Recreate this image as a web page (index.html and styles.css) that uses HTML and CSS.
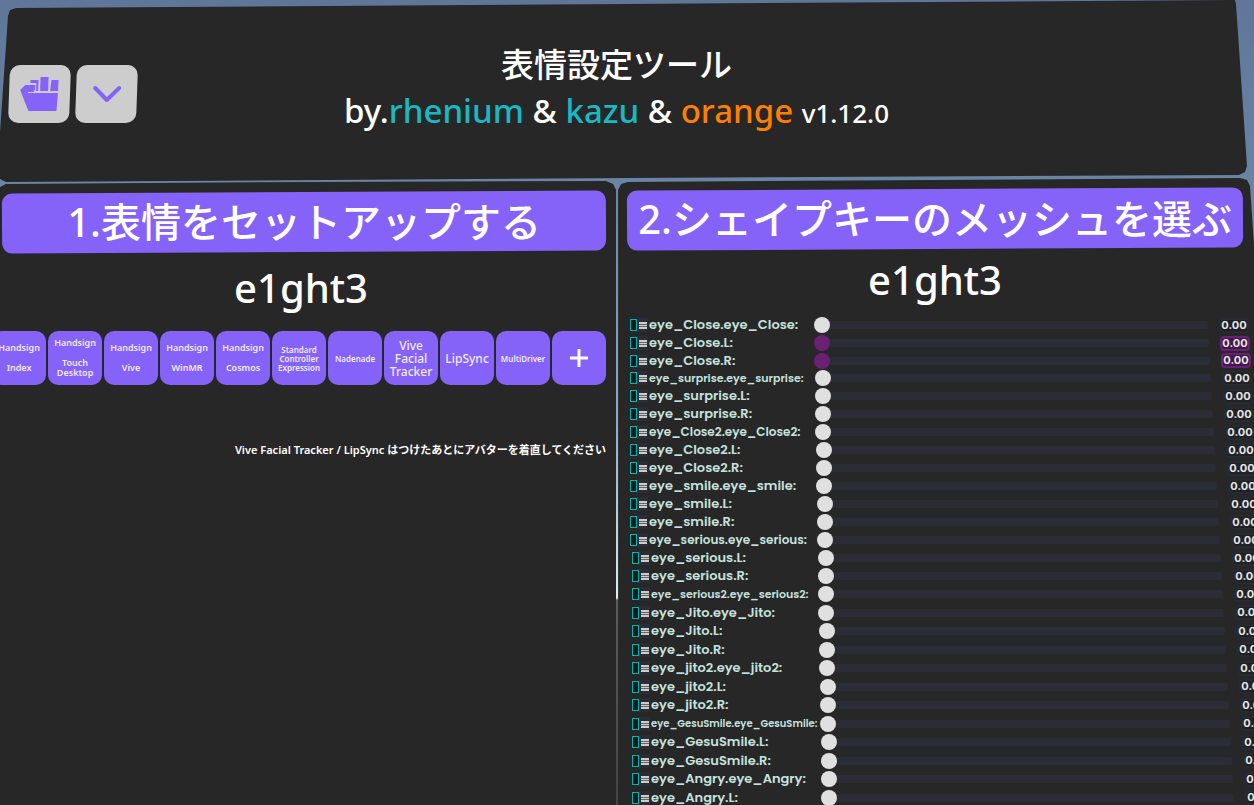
FILE: index.html
```
<!DOCTYPE html>
<html lang="ja">
  <head>
    <meta charset="UTF-8" />
    <meta name="viewport" content="width=device-width, initial-scale=1.0" />
    <title>表情設定ツール</title>
    <link rel="stylesheet" href="styles.css">
  </head>
  <body>
    <header class="top">
      <div class="top-buttons">
        <button class="icon-btn" aria-label="Grab">
          <svg width="40" height="36" viewBox="0 0 40 36" fill="#8562f8">
            <path d="M0 14 5 9H15V14H14V16H8V17H38L37 35H9Z" />
            <path d="M10 4H18V15H16V7H10Z" />
            <path d="M20 1H28V15H20Z" />
            <path d="M31 4H38V15H30Z" />
          </svg>
        </button>
        <button class="icon-btn" aria-label="Open menu">
          <svg width="30" height="20" viewBox="0 0 30 20" fill="none" stroke="#8562f8" stroke-width="4" stroke-linecap="round" stroke-linejoin="round">
            <path d="M3 4 15 16 27 4" />
          </svg>
        </button>
      </div>
      <div class="top-title">
        <h1>表情設定ツール</h1>
        <p>by.<span class="cyan">rhenium</span> &amp; <span class="cyan">kazu</span> &amp; <span class="orange">orange</span> <small>v1.12.0</small></p>
      </div>
    </header>

    <main>
      <section class="panel setup">
        <h2>1.表情をセットアップする</h2>
        <p class="avatar">e1ght3</p>
        <div class="presets">
          <button>Handsign<br><br>Index</button>
          <button>Handsign<br><br>Touch<br>Desktop</button>
          <button>Handsign<br><br>Vive</button>
          <button>Handsign<br><br>WinMR</button>
          <button>Handsign<br><br>Cosmos</button>
          <button class="small">Standard<br>Controller<br>Expression</button>
          <button class="small">Nadenade</button>
          <button class="large">Vive<br>Facial<br>Tracker</button>
          <button class="large">LipSync</button>
          <button class="small">MultiDriver</button>
          <button aria-label="Add">
            <svg width="20" height="20" viewBox="0 0 20 20" stroke="#fff" stroke-width="3">
              <path d="M10 1V19M1 10H19" />
            </svg>
          </button>
        </div>
        <p class="note">Vive Facial Tracker / LipSync はつけたあとにアバターを着直してください</p>
      </section>

      <section class="panel meshes">
        <h2>2.シェイプキーのメッシュを選ぶ</h2>
        <p class="avatar">e1ght3</p>
        <div id="shapeList" class="shape-list"></div>
      </section>
    </main>

    <script>
      const groups = [
        "Close",
        "surprise",
        "Close2",
        "smile",
        "serious",
        "Jito",
        "jito2",
        "GesuSmile",
        "Angry",
      ];
      const selected = ["eye_Close.L", "eye_Close.R"];

      // long names get a smaller font so they stay left of the slider
      const sizes = {
        "eye_surprise.eye_surprise": "long",
        "eye_Close2.eye_Close2": "medium",
        "eye_serious.eye_serious": "medium",
        "eye_serious2.eye_serious2": "long",
        "eye_GesuSmile.eye_GesuSmile": "longest",
      };

      const names = [];
      groups.forEach((g) => {
        names.push(`eye_${g}.eye_${g}`, `eye_${g}.L`, `eye_${g}.R`);
        if (g === "serious") names.push("eye_serious2.eye_serious2");
      });

      document.getElementById("shapeList").innerHTML = names
        .slice(0, 27)
        .map(
          (name, i) => `
          <div class="shape-row ${selected.includes(name) ? "selected" : ""}" style="--row: ${i}">
            <div class="shape-head">
              <input type="checkbox" aria-label="${name}" />
              <button class="handle" aria-label="Menu"></button>
              <label for="shape${i}" class="${sizes[name] || ""}">${name}:</label>
            </div>
            <input type="range" id="shape${i}" min="0" max="1" step="0.01" value="0" />
            <output for="shape${i}">0.00</output>
          </div>`
        )
        .join("");
    </script>
  </body>
</html>
```
FILE: styles.css
```
* {
  box-sizing: border-box;
}
html {
  height: 100%;
  overflow: hidden;
}
body {
  min-height: 100vh;
  margin: 0;
  display: flex;
  flex-direction: column;
  overflow: hidden;
  color: white;
  font-family: "Noto Sans", "Noto Sans CJK JP", sans-serif;
  font-weight: 500;
  background: linear-gradient(#5f7699 0, #6a84a5 180px, #8fa8cf 420px, #d8f0f0 598px, #5c5c5c 600px, #444 100%);
}
h1,
h2,
p {
  margin: 0;
  font-weight: 500;
}
button {
  border: none;
  padding: 0;
  font-family: inherit;
  font-weight: 600;
  cursor: pointer;
}

/* header */
.top {
  position: relative;
  height: 176px;
  display: grid;
  grid-template-columns: 1fr auto 1fr;
  align-items: center;
  padding: 2px 30px 0 9px;
}
.top::before {
  content: "";
  position: absolute;
  inset: 0 0 -8px;
  z-index: -1;
  background: #272727;
  clip-path: polygon(8px 16px, 10px 10px, 16px 8px, 50% 4px, calc(100% - 22px) 0, calc(100% - 19px) 0, calc(100% - 18px) 4px, calc(100% - 7px) 166px, calc(100% - 9px) 172px, calc(100% - 15px) 175px, 50% 178px, 6px 182px, 0 179px, 0 132px);
}
.top-buttons {
  display: flex;
  gap: 6px;
  padding-top: 10px;
}
.icon-btn {
  width: 61px;
  height: 58px;
  display: flex;
  align-items: center;
  justify-content: center;
  border-radius: 10px;
  background: #cdcdcd;
  transform: skewX(-2deg);
}
.top-title {
  text-align: center;
  line-height: 46px;
}
.top-title h1 {
  font-size: 33px;
}
.top-title p {
  font-size: 33px;
}
.top-title small {
  font-size: 26px;
}
.cyan {
  color: #19b8c5;
}
.orange {
  color: #ff7f00;
}

/* panels */
main {
  flex: 1;
  display: grid;
  grid-template-columns: minmax(0, 31fr) minmax(0, 32fr);
  gap: 2px;
}
.panel {
  background: #272727;
}
.panel h2 {
  position: relative;
  z-index: 0;
  height: 60px;
  line-height: 60px;
  font-size: 40px;
  text-align: center;
  white-space: nowrap;
}
.panel h2::before {
  content: "";
  position: absolute;
  inset: 0;
  z-index: -1;
  border-radius: 10px;
  background: #8562f8;
  transform: rotate(-0.3deg);
}
.setup {
  padding: 16px 10px 0 2px;
  clip-path: polygon(0 11px, 6px 8px, 50% 6px, calc(100% - 10px) 5px, calc(100% - 3px) 8px, 100% 14px, 100% 100%, 0 100%);
}
.meshes {
  padding: 13px 11px 0 9px;
  clip-path: polygon(0 14px, 3px 8px, 10px 6px, calc(100% - 14px) 2px, calc(100% - 7px) 4px, calc(100% - 4px) 10px, 100% 68px, 100% 100%, 0 100%);
}
.avatar {
  font-size: 40px;
  line-height: 56px;
  text-align: center;
}
.setup .avatar {
  padding: 8px 6px 15px 0;
}
.meshes .avatar {
  padding-top: 3px;
}
.presets {
  display: flex;
  justify-content: flex-end;
  gap: 2px;
}
.presets button {
  flex: none;
  width: 54px;
  height: 54px;
  display: flex;
  align-items: center;
  justify-content: center;
  border-radius: 10px;
  background: #8562f8;
  color: #f0ebff;
  font-size: 9px;
  line-height: 10px;
}
.presets .small {
  font-size: 8px;
  line-height: 9px;
}
.presets .large {
  font-size: 12px;
  line-height: 13px;
  font-weight: 500;
}
.note {
  padding-top: 56px;
  font-size: 11px;
  font-weight: 600;
  line-height: 18px;
  text-align: right;
  white-space: nowrap;
}

/* shape key list */
.shape-list {
  padding-top: 8px;
}
.shape-row {
  width: calc(100% + 6px + var(--row) * 1px);
  height: 18px;
  display: flex;
  align-items: center;
}
.shape-row:nth-child(3) {
  height: 17px;
}
.shape-row:nth-child(n + 16):nth-child(odd) {
  height: 19px;
}
.shape-head {
  width: 30%;
  display: flex;
  align-items: center;
  padding-left: 3px;
}
.shape-row:nth-child(n + 14) .shape-head {
  padding-left: 5px;
}
.shape-head input {
  appearance: none;
  width: 7px;
  height: 12px;
  margin: 0;
  border: 1px solid #00b4b4;
  background: #041c1c;
}
.handle {
  width: 11px;
  height: 14px;
  margin-right: 1px;
  border-left: 2px solid #2b2d36;
  border-right: 1px solid #2b2d36;
  background: linear-gradient(#2b2d36 4px, #ccc 4px 6px, #666 6px 7px, #ccc 7px 8px, #666 8px 9px, #ccc 9px 11px, #2b2d36 11px);
}
.shape-head label {
  color: #c6e2df;
  font-family: Poppins, Inter, sans-serif;
  font-size: 13px;
  font-weight: 600;
  line-height: 18px;
  white-space: nowrap;
}
.shape-head .medium {
  font-size: 12px;
}
.shape-head .long {
  font-size: 11px;
}
.shape-head .longest {
  font-size: 10px;
}
.shape-row input[type="range"] {
  appearance: none;
  flex: 1;
  min-width: 0;
  height: 16px;
  margin: 0 11px 0 0;
  background: linear-gradient(#2b2d36, #2b2d36) center / 100% 8px no-repeat;
  border-radius: 8px;
}
input[type="range"]::-webkit-slider-thumb {
  appearance: none;
  width: 16px;
  height: 16px;
  border-radius: 50%;
  background: #e0e0e0;
}
.selected input[type="range"]::-webkit-slider-thumb {
  background: #6b2173;
}
.shape-row output {
  width: 30px;
  border: 2px solid #272a31;
  border-radius: 4px;
  background: #202228;
  color: #e6e6e6;
  font-family: Inter, sans-serif;
  font-size: 11px;
  font-weight: 700;
  line-height: 11px;
  text-align: center;
}
.selected output {
  border-color: #6b2173;
  background: #45174d;
}
```
